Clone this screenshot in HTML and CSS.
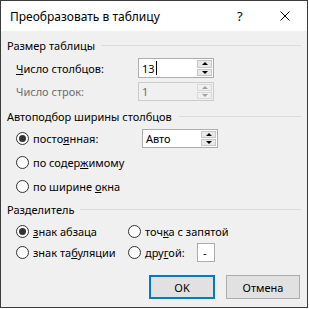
FILE: index.html
```html
<!DOCTYPE html>
<html lang="ru">
<head>
    <meta charset="UTF-8">
    <title>Преобразовать в таблицу</title>
    <link rel="stylesheet" href="styles.css">
</head>
<body>
    <div class="dialog">
        <div class="titlebar">
            <span class="title">Преобразовать в таблицу</span>
            <span class="help">?</span>
            <span class="close">
                <svg width="10" height="10" viewBox="0 0 10 10"><path d="M0.5 0.5 L9.5 9.5 M9.5 0.5 L0.5 9.5" stroke="#000" stroke-width="1" fill="none"/></svg>
            </span>
        </div>
        <div class="content">
            <div class="group-label"><span>Размер таблицы</span><i class="rule"></i></div>
            <div class="row first">
                <span class="lbl"><u>Ч</u>исло столбцов:</span>
                <div class="spin">
                    <div class="field">13<span class="caret"></span></div>
                    <div class="arrows"><span class="up"></span><span class="down"></span></div>
                </div>
            </div>
            <div class="row second disabled">
                <span class="lbl">Число строк:</span>
                <div class="spin">
                    <div class="field">1</div>
                    <div class="arrows"><span class="up"></span><span class="down"></span></div>
                </div>
            </div>

            <div class="group-label g2"><span>Автоподбор ширины столбцов</span><i class="rule"></i></div>
            <div class="row radio-row">
                <span class="radio checked"></span>
                <span class="lbl short">посто<u>я</u>нная:</span>
                <div class="spin">
                    <div class="field">Авто</div>
                    <div class="arrows"><span class="up"></span><span class="down"></span></div>
                </div>
            </div>
            <div class="row radio-row">
                <span class="radio"></span>
                <span>по содер<u>ж</u>имому</span>
            </div>
            <div class="row radio-row">
                <span class="radio"></span>
                <span>по ширине <u>о</u>кна</span>
            </div>

            <div class="group-label g3"><span>Разделитель</span><i class="rule"></i></div>
            <div class="sep-grid">
                <div class="opt"><span class="radio checked"></span><span><u>з</u>нак абзаца</span></div>
                <div class="opt"><span class="radio"></span><span>точ<u>к</u>а с запятой</span></div>
                <div class="opt"><span class="radio"></span><span>знак та<u>б</u>уляции</span></div>
                <div class="opt"><span class="radio"></span><span class="other">дру<u>г</u>ой:</span><span class="small-field">-</span></div>
            </div>

            <div class="buttons">
                <button class="btn default">OK</button>
                <button class="btn">Отмена</button>
            </div>
        </div>
    </div>
</body>
</html>
```

FILE: styles.css
```css
body { margin: 0; background: #fff; font-family: "Noto Sans", "Liberation Sans", sans-serif; font-size: 11px; color: #000; }
.dialog { width: 306px; height: 306px; border: 1px solid #3c3c3c; background: #f0f0f0; display: flex; flex-direction: column; }

.titlebar { height: 30px; background: #fff; display: flex; align-items: center; padding-left: 9px; }
.title { flex: 1; font-size: 12px; }
.help { width: 12px; margin-right: 31px; font-size: 13px; }
.close { width: 10px; height: 10px; margin-right: 17px; display: flex; }

.content { padding: 7px 6px 0 6px; flex: 1; }

.group-label { display: flex; align-items: center; height: 14px; gap: 6px; }
.group-label .rule { flex: 1; border-top: 1px solid #dcdcdc; margin-top: 1px; }
.group-label.g2 { margin-top: 8px; }
.group-label.g3 { margin-top: 4px; }

.row { display: flex; align-items: center; padding-left: 9px; }
.row.first { margin-top: 6px; height: 20px; }
.row.second { margin-top: 4px; height: 19px; }
.lbl { width: 122px; }
.lbl.short { width: 105px; }
.disabled { color: #6d6d6d; }

.spin { width: 76px; height: 19px; box-sizing: border-box; border: 1px solid #adadad; background: #fff; display: flex; }
.row.first .spin { height: 20px; }
.disabled .spin { background: #f0f0f0; border-color: #cccccc; }
.field { flex: 1; padding-left: 3px; display: flex; align-items: center; }
.caret { width: 1px; height: 14px; background: #000; margin-left: 1px; }
.arrows { width: 15px; display: flex; flex-direction: column; padding: 1px 1px 1px 0; gap: 1px; }
.arrows span { flex: 1; background: #e9e9e9; border: 1px solid #c8c8c8; display: flex; align-items: center; justify-content: center; }
.arrows .up::after { content: ""; border-left: 3px solid transparent; border-right: 3px solid transparent; border-bottom: 3px solid #000; }
.arrows .down::after { content: ""; border-left: 3px solid transparent; border-right: 3px solid transparent; border-top: 3px solid #000; }
.disabled .arrows span { background: #f0f0f0; border-color: #dadada; }
.disabled .arrows .up::after { border-bottom-color: #a0a0a0; }
.disabled .arrows .down::after { border-top-color: #a0a0a0; }

.radio-row { height: 24px; gap: 4px; }
.g2 + .radio-row { margin-top: 3px; }
.radio { width: 13px; height: 13px; box-sizing: border-box; border: 1px solid #333; border-radius: 50%; background: #fff; display: flex; align-items: center; justify-content: center; flex: none; }
.radio.checked::after { content: ""; width: 7px; height: 7px; border-radius: 50%; background: #333; }

.sep-grid { display: grid; grid-template-columns: 112px 1fr; grid-auto-rows: 21px; padding-left: 9px; margin-top: 5px; }
.opt { display: flex; align-items: center; gap: 4px; }
.other { width: 48px; }
.small-field { width: 18px; height: 19px; box-sizing: border-box; border: 1px solid #adadad; background: #fff; display: flex; align-items: center; padding-left: 5px; }

.buttons { display: flex; justify-content: flex-end; gap: 11px; margin-top: 12px; padding-right: 1px; }
.btn { height: 24px; width: 74px; font-family: inherit; font-size: 11px; background: #e1e1e1; border: 1px solid #adadad; padding: 0; color: #000; }
.btn.default { width: 66px; border: 2px solid #0078d7; }
```
